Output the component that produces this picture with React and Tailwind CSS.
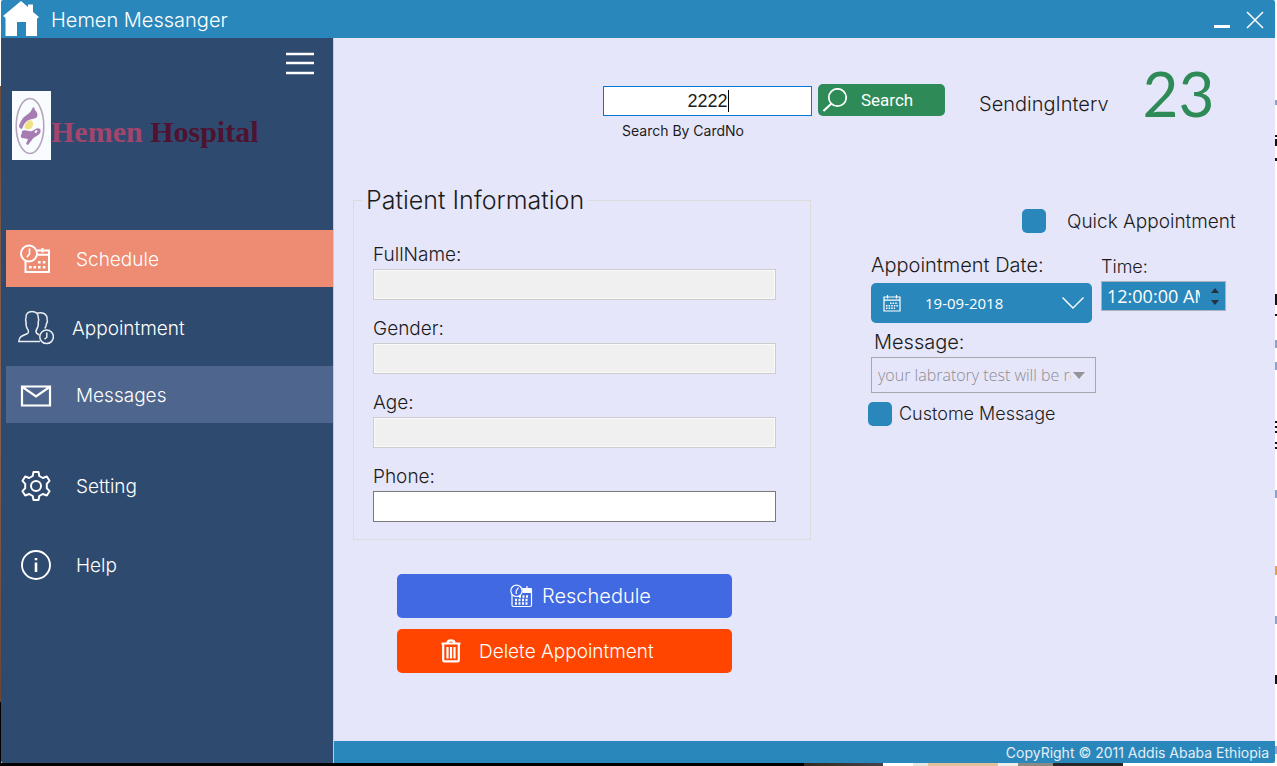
const textFace = "font-['Inter','Open_Sans',sans-serif] font-light";

function HomeIcon() {
  return (
    <svg className="h-9 w-9" viewBox="0 0 36 36" fill="#fff" aria-hidden="true">
      <path d="M18 0 25 6V3.500h5V11l6 5-1.500 1.500L34 17v18H23V21h-9v14H2.500V17L1.500 16 0 15z" />
    </svg>
  );
}

function ScheduleIcon() {
  return (
    <svg className="h-9 w-9" viewBox="0 0 36 36" fill="none" stroke="#fff" strokeWidth="2" aria-hidden="true">
      <path d="M18.500 9.500H31V31H7.500V20" />
      <path d="M19.500 13.800H31M24.500 7v4.500" />
      <circle cx="11" cy="12.500" r="8" />
      <path d="M11.500 7.500v5.500L9 16" strokeWidth="1.700" />
      <g fill="#fff" stroke="none">
        <path d="M20 20h2.600v2.600H20zM24.800 20h2.600v2.600h-2.600zM11 25h2.600v2.600H11zM15.500 25h2.600v2.600h-2.600zM20 25h2.600v2.600H20zM24.800 25h2.600v2.600h-2.600z" />
      </g>
    </svg>
  );
}

function PeopleIcon() {
  return (
    <svg className="h-9 w-9" viewBox="0 0 36 36" fill="none" stroke="#e9edf3" strokeWidth="1.500" aria-hidden="true">
      <path d="M22 31.500H.800C.800 27 3.500 26 9.500 23.500c1.300-.600 1.300-3 0-4.500C8 17 7.800 15 8 11.500c-.700-1.200-.500-2.500 0-3.500C7.500 4 10 1.500 14 1.500s6.700 2.500 6.300 6.500c.500 1.200.700 2.500 0 3.500.200 3.500 0 5.500-1.500 7.500-.900 1.500-.800 3.500 0 4.500l2.500 1.500" />
      <path d="M18.500 3.300c5.500-1.800 11 .200 10.600 6.200.700 1.500.200 3-.600 4 0 2-.700 3.500-1.700 5" />
      <circle cx="28.600" cy="26.800" r="6.800" />
      <path d="M28.800 22.500v4.700l-2.300 2" />
    </svg>
  );
}

function MailIcon() {
  return (
    <svg className="h-9 w-9" viewBox="0 0 36 36" fill="none" stroke="#fff" strokeWidth="2.200" aria-hidden="true">
      <path d="M4 9.500h28v19H4zM4.500 10 18 19.500 31.500 10" />
    </svg>
  );
}

function GearIcon() {
  return (
    <svg className="h-9 w-9" viewBox="0 0 36 36" fill="none" stroke="#fff" strokeWidth="2" strokeLinejoin="round" aria-hidden="true">
      <path d="M15.500 4h5l.800 4 3.500 2 4-1.500 2.700 4.300-2.700 3v4.400l2.700 3-2.700 4.300-4-1.500-3.500 2-.800 4h-5l-.800-4-3.500-2-4 1.500-2.700-4.300 2.700-3v-4.400l-2.700-3 2.700-4.300 4 1.500 3.500-2z" />
      <circle cx="18" cy="18" r="5" />
    </svg>
  );
}

function InfoIcon() {
  return (
    <svg className="h-9 w-9" viewBox="0 0 36 36" fill="none" stroke="#fff" strokeWidth="1.900" aria-hidden="true">
      <circle cx="18" cy="18" r="14" />
      <path d="M18 15.500v9.500M18 11v2.300" strokeWidth="2.600" />
    </svg>
  );
}

function RescheduleIcon() {
  return (
    <svg className="h-6 w-6" viewBox="0 0 24 24" fill="none" stroke="#fff" strokeWidth="1.200" aria-hidden="true">
      <rect x="3" y="4.500" width="19.500" height="18" rx="1.500" />
      <path d="M14 4.500h8v4h-8zM18 2v4" fill="#fff" />
      <circle cx="7.500" cy="6.800" r="5.700" fill="#4169e1" />
      <path d="M9.500 3.500 7.200 7v3" />
      <path d="M10 12.500h10M6 16h14M6 19.500h14" strokeWidth="2.300" strokeDasharray="2 1.500" />
    </svg>
  );
}

function TrashIcon() {
  return (
    <svg className="h-6 w-6" viewBox="0 0 24 24" fill="none" stroke="#fff" strokeWidth="2.200" aria-hidden="true">
      <path d="M2.500 4.500h19M4.200 5v16c0 .800.500 1.400 1.200 1.400h13.200c.700 0 1.200-.600 1.200-1.400V5M8.500 4c0-3.500 7-3.500 7 0" />
      <path d="M8.500 8v11.500M12 8v11.500M15.500 8v11.500" />
    </svg>
  );
}

function CalendarIcon() {
  return (
    <svg className="h-[18px] w-[18px]" viewBox="0 0 18 18" fill="none" stroke="#fff" strokeWidth="1.200" aria-hidden="true">
      <path d="M1 3h16v14H1zM1 6.200h16M4.500 1v3.500M13.500 1v3.500" />
      <path d="M7 9.200h8M3 11.700h12M3 14.200h9" strokeWidth="1.400" strokeDasharray="1.500 1.100" />
    </svg>
  );
}

function SearchIcon() {
  return (
    <svg className="h-6 w-6" viewBox="0 0 24 24" fill="none" stroke="#fff" strokeWidth="1.700" aria-hidden="true">
      <circle cx="14.500" cy="9.500" r="8.700" />
      <path d="M8.500 15.500.500 23" strokeWidth="2" />
    </svg>
  );
}

function Emblem() {
  return (
    <svg className="h-[69px] w-[39px] shrink-0" viewBox="0 0 39 69" aria-hidden="true">
      <path fill="#f8fcfe" d="M0 0h39v69H0z" />
      <ellipse cx="18" cy="35" rx="13.800" ry="27.500" fill="none" stroke="#b7a3bd" strokeWidth="1.600" />
      <path fill="#a67cb2" d="M22 16c1 1 0 3 2 4 2 3 2 5 0 7-3 1-7 1-10 4-2 2-3 4-4 7-1 0-3-1-3-3 1-4 3-6 4-8 3-3 6-4 8-7 1-2 1-3 3-4z" />
      <path fill="#f1e185" d="M15 31c3-3 6-2 6 2 0 4-3 6-7 5-2-1-2-4 1-7z" />
      <path fill="#a67cb2" d="M10 40c4-2 6 1 10 0 3-1 5-4 8-2 2 3-1 6-5 8-2 1-4 4-7 8l-2-1 2-5c-4-1-8 0-7-4 1-1 1-3 1-4zm13 2c2 0 3-2 2-3-2 0-3 2-2 3z" />
    </svg>
  );
}

const navItems = [
  { label: "Schedule", icon: ScheduleIcon, className: "gap-[22px] bg-[#ee8b73]" },
  { label: "Appointment", icon: PeopleIcon, className: "mt-3 gap-[18px]" },
  { label: "Messages", icon: MailIcon, className: "mt-[10px] gap-[22px] bg-[#4e658d]" },
  { label: "Setting", icon: GearIcon, className: "mt-[34px] gap-[22px]" },
  { label: "Help", icon: InfoIcon, className: "mt-[22px] gap-[22px]" },
];

function Sidebar() {
  return (
    <aside className="flex w-[332px] shrink-0 flex-col bg-[#2e4a6e] text-white">
      <button type="button" aria-label="Menu" className="mt-[14px] mr-[18px] self-end">
        <svg className="h-6 w-[30px]" viewBox="0 0 30 24" stroke="#fff" strokeWidth="2.400" aria-hidden="true">
          <path d="M1 2h28M1 11h28M1 21h28" />
        </svg>
      </button>
      <div className="mt-[15px] flex items-center pl-[11px]">
        <Emblem />
        <h1 className="pt-3 font-['Liberation_Serif',serif] text-[30px] font-bold whitespace-nowrap text-[#a3456c]">
          Hemen <span className="text-[#4f1230]">Hospital</span>
        </h1>
      </div>
      <nav className="mt-[70px] flex flex-col pl-[5px]">
        {navItems.map(({ label, icon: Icon, className }) => (
          <button key={label} type="button" className={`flex h-[57px] items-center pl-3 text-[19px] ${className}`}>
            <Icon />
            <span className="pt-[3px]">{label}</span>
          </button>
        ))}
      </nav>
    </aside>
  );
}

function TitleBar() {
  return (
    <header className="flex h-[38px] shrink-0 items-center bg-[#2a87bc] pr-[11px] pl-[2px] text-white">
      <HomeIcon />
      <span className="ml-3 flex-1 pt-[2px] text-[20px]">Hemen Messanger</span>
      <button type="button" aria-label="Minimize" className="mr-[15px]">
        <svg className="block h-5 w-[18px]" viewBox="0 0 18 20" aria-hidden="true">
          <path fill="#fff" d="M1 16h16v3H1z" />
        </svg>
      </button>
      <button type="button" aria-label="Close" className="pt-[2px]">
        <svg className="block h-[18px] w-[18px]" viewBox="0 0 18 18" stroke="#fff" strokeWidth="1.500" aria-hidden="true">
          <path d="M1 1l16 16M17 1 1 17" />
        </svg>
      </button>
    </header>
  );
}

function SearchRow() {
  return (
    <div className="flex items-start pl-[250px]">
      <form className="pt-[22px]" onSubmit={(e) => e.preventDefault()}>
        <div className="flex items-end gap-[6px]">
          <div className="relative">
            <input
              id="card"
              type="text"
              defaultValue="2222"
              className="block h-[30px] w-[209px] border border-[#0078d7] bg-white text-center font-['Liberation_Sans',sans-serif] text-[18px] font-normal outline-none"
            />
            <span className="absolute top-1 left-1/2 ml-5 h-[22px] w-px bg-black" />
          </div>
          <button
            type="submit"
            className="flex h-8 w-[127px] items-center gap-[14px] rounded-[5px] bg-[#2e8b57] pl-[5px] font-['Roboto',sans-serif] text-[17px] font-normal text-white"
          >
            <SearchIcon />
            <span className="pt-[2px]">Search</span>
          </button>
        </div>
        <label htmlFor="card" className="mt-[5px] ml-[19px] block text-[14px] leading-5 font-normal">
          Search By CardNo
        </label>
      </form>
      <span className="ml-[34px] pt-7 text-[20px] leading-7">SendingInterv</span>
      <span className="ml-[34px] font-['Lato',sans-serif] text-[62px] leading-none font-normal text-[#2e8b57]">23</span>
    </div>
  );
}

const fields = [
  { id: "fullname", label: "FullName:", disabled: true },
  { id: "gender", label: "Gender:", disabled: true },
  { id: "age", label: "Age:", disabled: true },
  { id: "phone", label: "Phone:", disabled: false },
];

function PatientForm() {
  return (
    <div className="w-[458px] shrink-0">
      <fieldset className="border border-[#dcdcdc] pb-[17px]">
        <legend className="ml-2 px-1 text-[25px] leading-7">Patient Information</legend>
        <div className="flex flex-col gap-4 pt-7 pr-[34px] pl-[19px]">
          {fields.map((f) => (
            <div key={f.id} className="flex flex-col gap-[2px]">
              <label htmlFor={f.id} className="pt-px text-[19px] leading-6">
                {f.label}
              </label>
              <input
                id={f.id}
                type="text"
                disabled={f.disabled}
                className="h-[31px] border border-[#7a7a7a] bg-white px-2 text-[18px] disabled:border-[#cccccc] disabled:bg-[#f0f0f0] disabled:inset-ring disabled:inset-ring-[#fafafa]"
              />
            </div>
          ))}
        </div>
      </fieldset>
      <div className="mt-[34px] ml-11 flex w-[335px] flex-col gap-[11px] text-white">
        <button type="button" className="flex h-11 items-center gap-[9px] rounded-[5px] bg-[#4169e1] pl-28 text-[20px]">
          <RescheduleIcon />
          <span>Reschedule</span>
        </button>
        <button type="button" className="flex h-11 items-center gap-4 rounded-[5px] bg-[#ff4500] pl-[42px] text-[19px]">
          <TrashIcon />
          <span className="pt-[2px]">Delete Appointment</span>
        </button>
      </div>
    </div>
  );
}

const tick = "h-6 w-6 shrink-0 appearance-none rounded-[5px] bg-[#2a87bc]";

function AppointmentForm() {
  return (
    <div className="flex flex-col items-start pt-[21px]">
      <div className="ml-[151px] flex items-center gap-[21px]">
        <input id="quick" type="checkbox" className={tick} />
        <label htmlFor="quick" className="pt-[3px] text-[19px] leading-6 whitespace-nowrap">
          Quick Appointment
        </label>
      </div>
      <div className="mt-[19px] flex items-start gap-[9px]">
        <div>
          <label htmlFor="date" className="block text-[20px] leading-6">
            Appointment Date:
          </label>
          <button
            id="date"
            type="button"
            className="mt-[6px] flex h-10 w-[221px] items-center rounded-[5px] bg-[#2a87bc] pr-2 pl-3 font-['Open_Sans',sans-serif] text-[15px] font-normal text-white"
          >
            <CalendarIcon />
            <span className="ml-6 flex-1 text-left">19-09-2018</span>
            <svg className="h-3 w-[22px]" viewBox="0 0 22 12" fill="none" stroke="#fff" strokeWidth="1.400" aria-hidden="true">
              <path d="M.500.500 11 11 21.500.500" />
            </svg>
          </button>
        </div>
        <div>
          <label htmlFor="time" className="block text-[18px] leading-7">
            Time:
          </label>
          <div className="flex h-[30px] w-[125px] items-center border border-[#a9b2bd] bg-[#2a87bc] pr-[5px] pl-[5px]">
            <input
              id="time"
              type="text"
              defaultValue="12:00:00 AM"
              className="h-full w-[93px] min-w-0 bg-transparent font-['Open_Sans',sans-serif] text-[18px] font-normal text-white outline-none"
            />
            <div className="ml-[11px] flex flex-col gap-[7px]">
              <button type="button" aria-label="Later">
                <svg className="block h-[5px] w-2" viewBox="0 0 8 5" fill="#26303f" aria-hidden="true">
                  <path d="M0 5 4 0l4 5z" />
                </svg>
              </button>
              <button type="button" aria-label="Earlier">
                <svg className="block h-[5px] w-2" viewBox="0 0 8 5" fill="#26303f" aria-hidden="true">
                  <path d="M0 0l4 5 4-5z" />
                </svg>
              </button>
            </div>
          </div>
        </div>
      </div>
      <label htmlFor="message" className="mt-[7px] ml-[3px] block text-[20px] leading-6">
        Message:
      </label>
      <div className="relative mt-[3px]">
        <select
          id="message"
          disabled
          className="block h-9 w-[225px] appearance-none border border-[#a8a8ac] bg-transparent pr-[24px] pl-[6px] font-['Open_Sans',sans-serif] text-[16px] font-light text-[#8c8c90] opacity-100"
        >
          <option>your labratory test will be ready</option>
        </select>
        <svg className="absolute top-[15px] right-[11px] h-[7px] w-3" viewBox="0 0 12 7" fill="#949498" aria-hidden="true">
          <path d="M0 0h12L6 7z" />
        </svg>
      </div>
      <div className="mt-[9px] -ml-[3px] flex items-center gap-[7px]">
        <input id="custom" type="checkbox" className={tick} />
        <label htmlFor="custom" className="text-[18px] leading-6 whitespace-nowrap">
          Custome Message
        </label>
      </div>
    </div>
  );
}

function RightEdge() {
  return (
    <svg className="w-[2px] shrink-0 bg-white" height="763" viewBox="0 0 2 763" aria-hidden="true">
      <path fill="#111" d="M0 135h2v2H0zM0 139h2v7H0zM0 158h2v3H0zM0 294h2v11H0zM0 314h2v2H0zM0 421h2v2H0zM0 426h2v2H0zM0 431h2v2H0zM0 442h2v2H0zM0 447h2v2H0zM0 675h2v9H0z" />
      <path fill="#8fa3c8" d="M0 100h2v5H0zM0 340h2v8H0zM0 362h2v8H0zM0 490h2v8H0zM0 616h2v8H0zM0 746h2v8H0z" />
      <path fill="#e6a23c" d="M0 566h2v9H0z" />
    </svg>
  );
}

export default function App() {
  return (
    <div className={`flex min-h-screen flex-col bg-black text-[#1c1c1c] ${textFace}`}>
      <div className="flex flex-1 bg-white">
        <div className="flex w-px shrink-0 flex-col">
          <div className="h-[86px] bg-white" />
          <div className="flex-1 bg-linear-to-b from-[#6e4a3a] via-[#8a6450] to-[#6b4632]" />
          <div className="h-[61px] bg-black" />
        </div>
        <div className="flex min-w-0 flex-1 flex-col overflow-hidden rounded-[2px]">
          <TitleBar />
          <div className="flex flex-1">
            <Sidebar />
            <div className="flex min-w-0 flex-1 flex-col border-l border-[#c5c8de] bg-[#e6e6fa]">
              <main className="flex-1 pt-6 pl-[19px]">
                <SearchRow />
                <div className="mt-[45px] flex gap-[60px]">
                  <PatientForm />
                  <AppointmentForm />
                </div>
              </main>
              <footer className="flex h-[22px] items-center justify-end bg-[#2a87bc] pr-[6px] text-[14px] font-normal text-[#e4eef6]">
                CopyRight © 2011 Addis Ababa Ethiopia
              </footer>
            </div>
          </div>
        </div>
        <RightEdge />
      </div>
      <div className="flex h-[3px] shrink-0" aria-hidden="true">
        <div className="flex-1 bg-black" />
        <div className="w-[79px] bg-linear-to-r from-[#33291f] to-[#44444f]" />
        <div className="w-[30px] bg-white" />
        <div className="w-[15px] bg-[#e6e6e6]" />
        <div className="w-[70px] bg-[#e3c198]" />
        <div className="w-[20px] bg-[#eeeeee]" />
        <div className="w-[35px] bg-[#8b8987]" />
        <div className="w-[70px] bg-[#25272b]" />
        <div className="w-[154px] bg-white" />
      </div>
    </div>
  );
}
